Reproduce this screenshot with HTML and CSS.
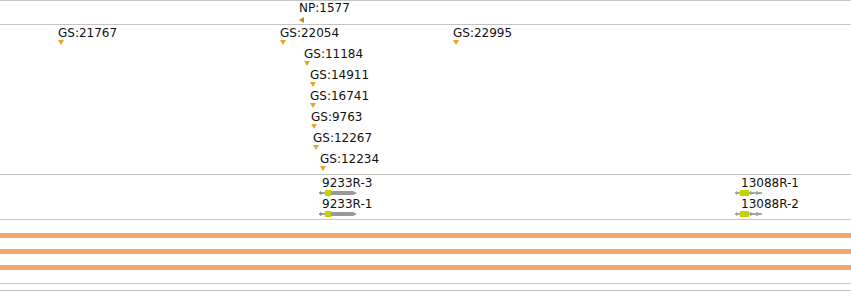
FILE: index.html
```html
<!DOCTYPE html>
<html lang="en">
<head>
    <meta charset="UTF-8">
    <title>Track view</title>
    <link rel="stylesheet" href="styles.css">
</head>
<body>
    <div class="view">
        <!-- NP track -->
        <div class="track track-np">
            <div class="feat" style="left: 299px; top: 0px;">
                <div class="label">NP:1577</div>
                <div class="tri-left"></div>
            </div>
        </div>

        <!-- GS track -->
        <div class="track track-gs">
            <div class="feat" style="left: 58px; top: 1px;"><div class="label">GS:21767</div><div class="tri"></div></div>
            <div class="feat" style="left: 280px; top: 1px;"><div class="label">GS:22054</div><div class="tri"></div></div>
            <div class="feat" style="left: 453px; top: 1px;"><div class="label">GS:22995</div><div class="tri"></div></div>
            <div class="feat" style="left: 304px; top: 22px;"><div class="label">GS:11184</div><div class="tri"></div></div>
            <div class="feat" style="left: 310px; top: 43px;"><div class="label">GS:14911</div><div class="tri"></div></div>
            <div class="feat" style="left: 310px; top: 64px;"><div class="label">GS:16741</div><div class="tri"></div></div>
            <div class="feat" style="left: 311px; top: 85px;"><div class="label">GS:9763</div><div class="tri"></div></div>
            <div class="feat" style="left: 313px; top: 106px;"><div class="label">GS:12267</div><div class="tri"></div></div>
            <div class="feat" style="left: 320px; top: 127px;"><div class="label">GS:12234</div><div class="tri"></div></div>
        </div>

        <!-- gene track -->
        <div class="track track-genes">
            <div class="feat gene" style="left: 319px; top: 1px;">
                <div class="label label-gene">9233R-3</div>
                <svg class="glyph" width="40" height="6" viewBox="0 0 40 6">
                    <rect x="0" y="2" width="6" height="2" fill="#a8a8a8"/>
                    <polygon points="1,1 4,3 1,5" fill="#8a8a8a"/>
                    <rect x="6" y="0" width="6" height="6" fill="#c4d400"/>
                    <rect x="12" y="1" width="22" height="4" fill="#999"/>
                    <polygon points="34,1 38,3 34,5" fill="#999"/>
                </svg>
            </div>
            <div class="feat gene" style="left: 319px; top: 22px;">
                <div class="label label-gene">9233R-1</div>
                <svg class="glyph" width="40" height="6" viewBox="0 0 40 6">
                    <rect x="0" y="2" width="6" height="2" fill="#a8a8a8"/>
                    <polygon points="1,1 4,3 1,5" fill="#8a8a8a"/>
                    <rect x="6" y="0" width="6" height="6" fill="#c4d400"/>
                    <rect x="12" y="1" width="22" height="4" fill="#999"/>
                    <polygon points="34,1 38,3 34,5" fill="#999"/>
                </svg>
            </div>
            <div class="feat gene" style="left: 735px; top: 1px;">
                <div class="label label-gene label-gene2">13088R-1</div>
                <svg class="glyph" width="30" height="6" viewBox="0 0 30 6">
                    <rect x="0" y="2" width="5" height="2" fill="#b0b0b0"/>
                    <polygon points="1,1 4,3 1,5" fill="#a0a0a0"/>
                    <rect x="5" y="0" width="9" height="6" fill="#c4d400"/>
                    <rect x="14" y="2" width="13" height="2" fill="#b0b0b0"/>
                    <polygon points="15,1 20,3 15,5" fill="#a0a0a0"/>
                    <polygon points="21,1 27,3 21,5" fill="#a0a0a0"/>
                </svg>
            </div>
            <div class="feat gene" style="left: 735px; top: 22px;">
                <div class="label label-gene label-gene2">13088R-2</div>
                <svg class="glyph" width="30" height="6" viewBox="0 0 30 6">
                    <rect x="0" y="2" width="5" height="2" fill="#b0b0b0"/>
                    <polygon points="1,1 4,3 1,5" fill="#a0a0a0"/>
                    <rect x="5" y="0" width="9" height="6" fill="#c4d400"/>
                    <rect x="14" y="2" width="13" height="2" fill="#b0b0b0"/>
                    <polygon points="15,1 20,3 15,5" fill="#a0a0a0"/>
                    <polygon points="21,1 27,3 21,5" fill="#a0a0a0"/>
                </svg>
            </div>
        </div>

        <!-- coverage bands -->
        <div class="bands">
            <div class="band"></div>
            <div class="band"></div>
            <div class="band"></div>
        </div>

        <div class="rules">
            <div class="rule"></div>
            <div class="rule"></div>
        </div>
    </div>
</body>
</html>
```

FILE: styles.css
```css
* {
  margin: 0;
  padding: 0;
  box-sizing: border-box;
}

body {
  font-family: "DejaVu Sans", Verdana, sans-serif;
  font-size: 12px;
  color: #111;
  background-color: #fff;
  width: 851px;
  height: 291px;
  overflow: hidden;
}

.view {
  display: flex;
  flex-direction: column;
}

.track {
  position: relative;
  border-top: 1px solid #c4c4c4;
}

.track-np {
  height: 24px;
}

.track-gs {
  height: 150px;
}

.track-genes {
  height: 46px;
  border-bottom: 1px solid #c4c4c4;
}

.feat {
  position: absolute;
  display: flex;
  flex-direction: column;
  align-items: flex-start;
}

.label {
  line-height: 14px;
  height: 14px;
  white-space: nowrap;
}

.label-gene {
  margin-left: 3px;
}

.label-gene2 {
  margin-left: 6px;
}

.tri {
  width: 0;
  height: 0;
  border-left: 3.5px solid transparent;
  border-right: 3.5px solid transparent;
  border-top: 5px solid #eba424;
}

.tri-left {
  width: 0;
  height: 0;
  margin-top: 2px;
  border-top: 3px solid transparent;
  border-bottom: 3px solid transparent;
  border-right: 5px solid #c98c12;
}

.glyph {
  display: block;
}

.bands {
  display: flex;
  flex-direction: column;
  gap: 11px;
  padding-top: 13px;
}

.band {
  height: 5px;
  background-color: #f4a470;
}

.rules {
  display: flex;
  flex-direction: column;
  gap: 6px;
  padding-top: 13px;
}

.rule {
  height: 1px;
  background-color: #c4c4c4;
}
```
